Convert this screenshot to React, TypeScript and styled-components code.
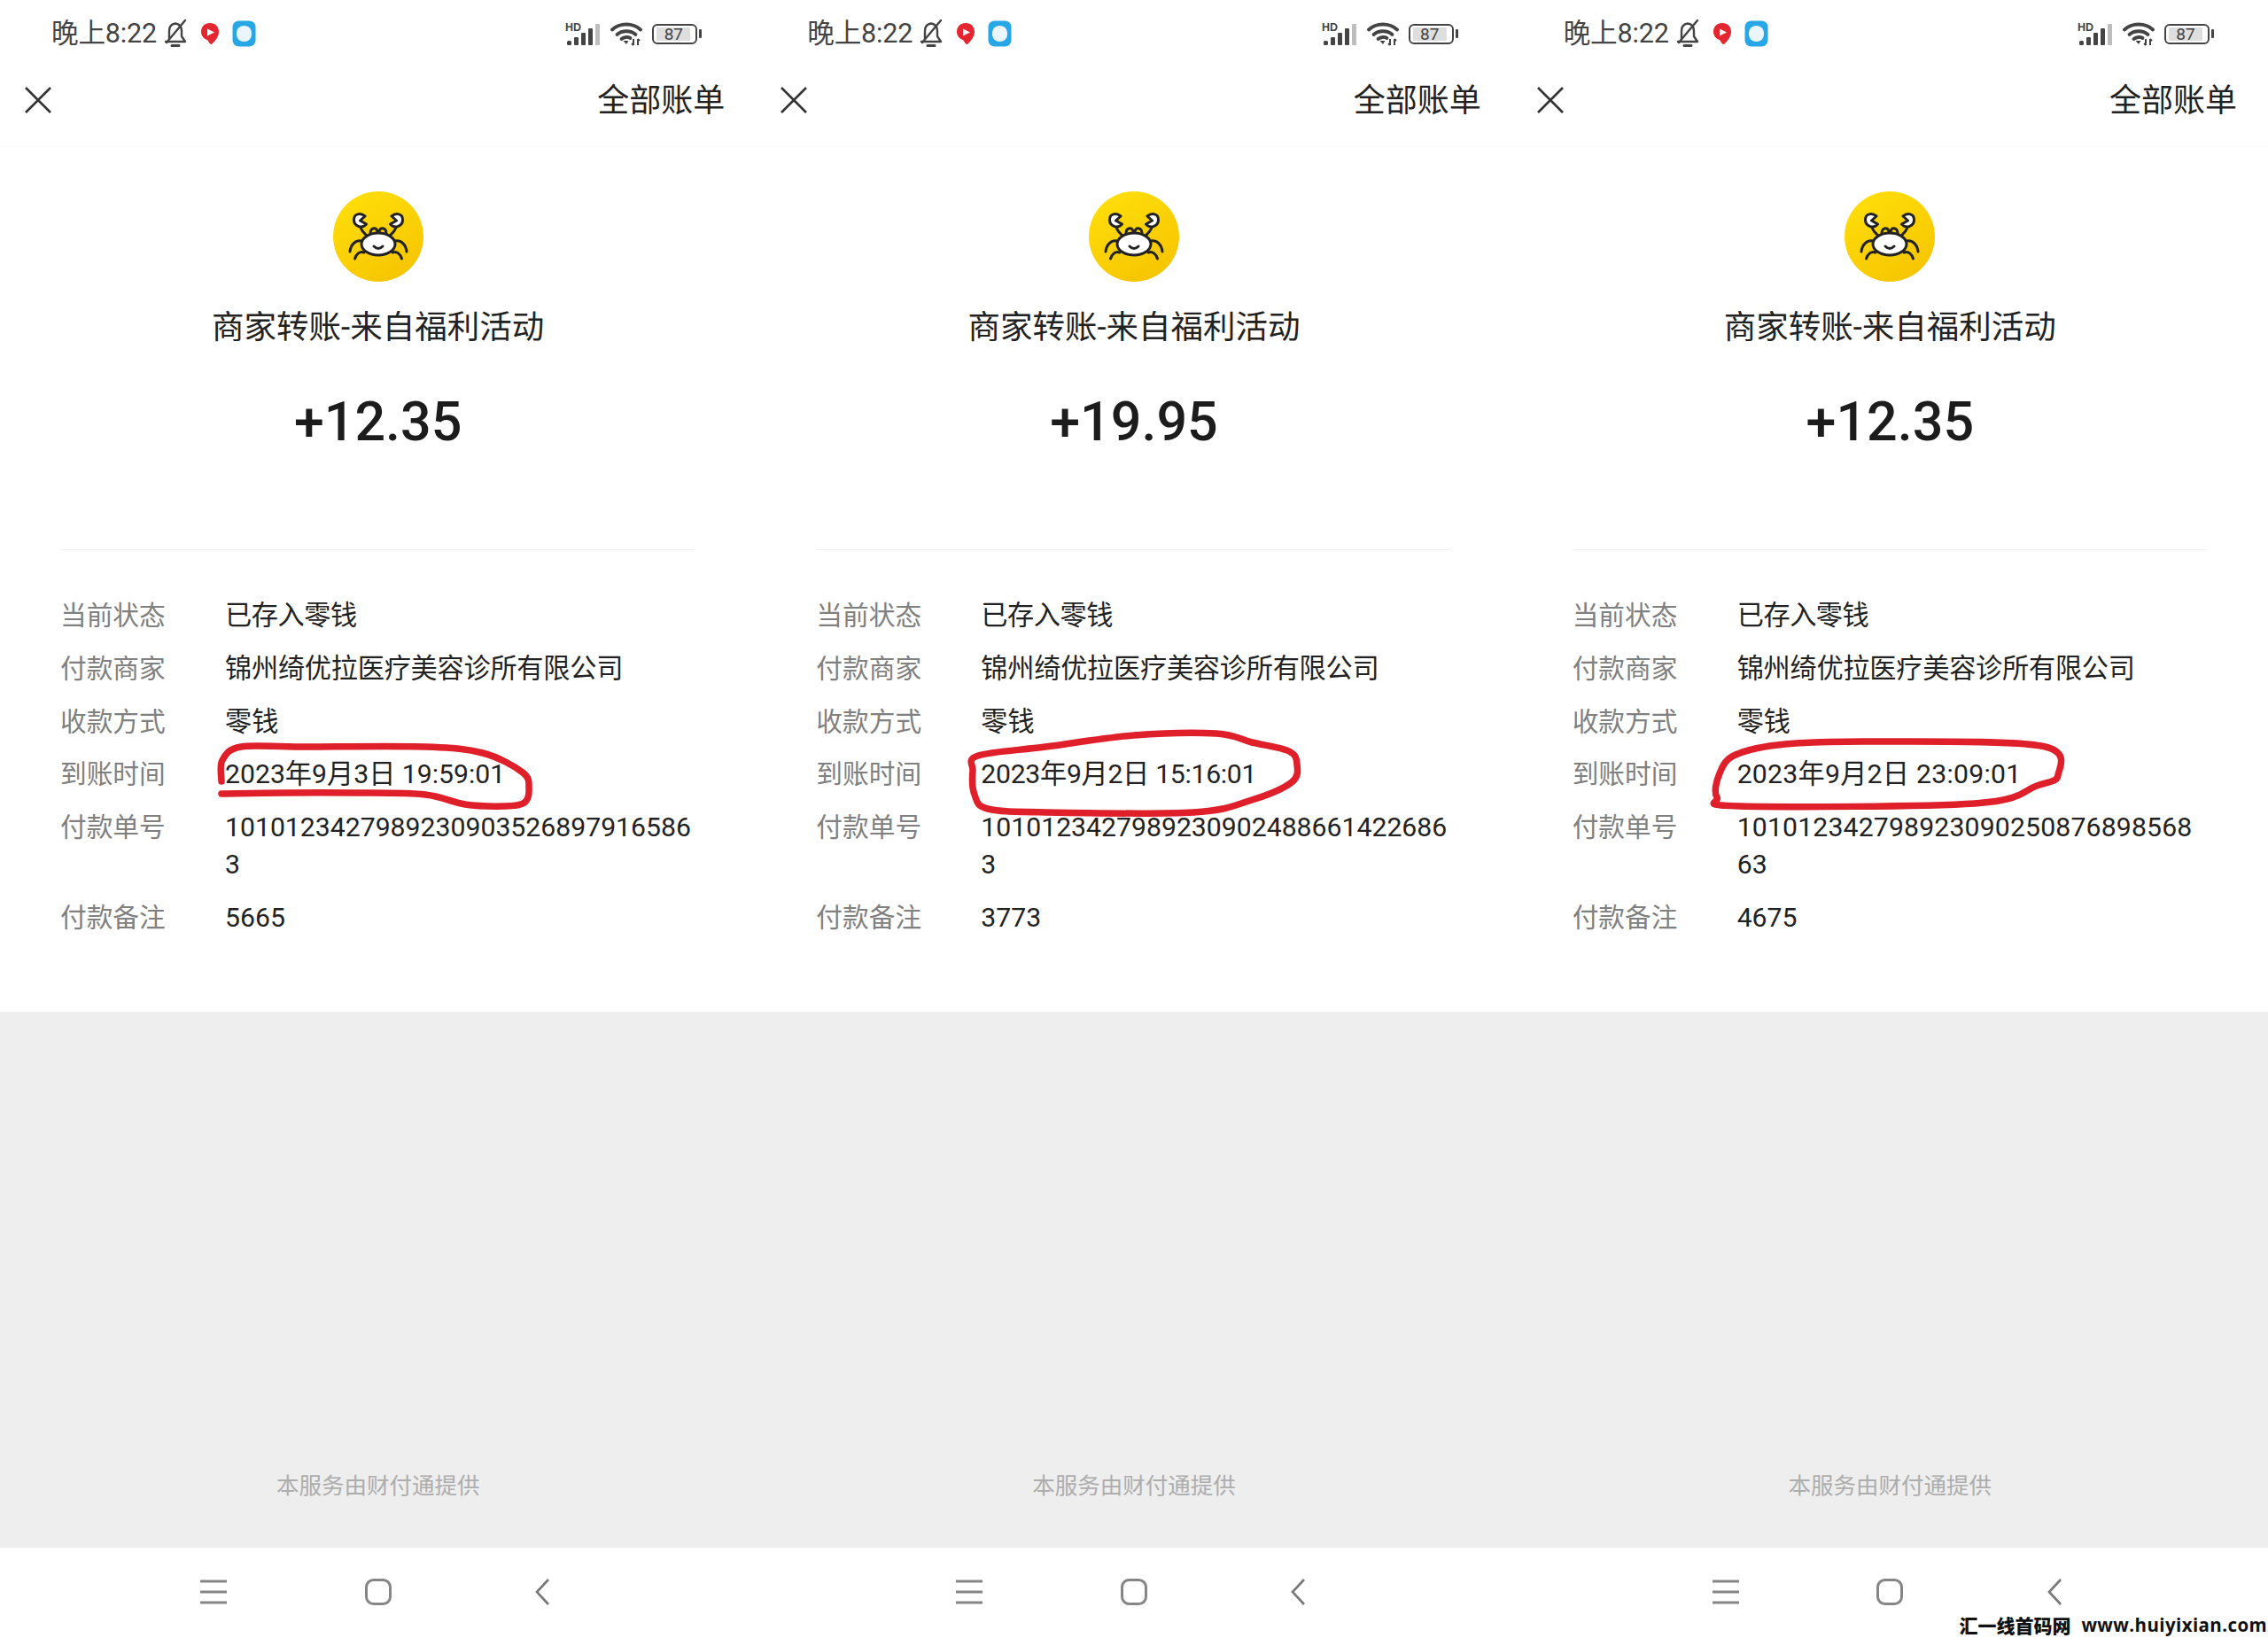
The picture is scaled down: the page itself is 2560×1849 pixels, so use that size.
import React from 'react';
import styled, { createGlobalStyle } from 'styled-components';

const Global = createGlobalStyle`
  html, body { margin: 0; padding: 0; background: #fff; }
  * { box-sizing: border-box; }
`;

const FONT = `Roboto, "Noto Sans CJK SC", sans-serif`;

const Page = styled.div`
  position: relative;
  width: 2560px;
  height: 1849px;
  display: grid;
  grid-template-columns: repeat(3, 1fr);
  overflow: hidden;
  font-family: ${FONT};
  background: #fff;
`;
const Panel = styled.section`
  position: relative;
  display: flex;
  flex-direction: column;
  height: 1849px;
  min-width: 0;
`;
const StatusBar = styled.div`
  height: 76px;
  display: flex;
  align-items: center;
  padding: 0 61px 0 58px;
  color: #444;
`;
const Clock = styled.span`
  font-size: 30.6px;
  line-height: 36px;
  letter-spacing: -0.2px;
  margin-right: 7px;
`;
const LeftIcons = styled.div`
  display: flex;
  align-items: center;
  gap: 14px;
`;
const RightIcons = styled.div`
  margin-left: auto;
  display: flex;
  align-items: center;
  gap: 11px;
`;
const Battery = styled.div`
  position: relative;
  width: 51px;
  height: 23px;
  border: 2.5px solid #444;
  border-radius: 6px;
  padding: 2px 6px 2px 3px;
  margin-right: 5px;
  display: flex;
  &::after {
    content: '';
    position: absolute;
    right: -7px;
    top: 4px;
    width: 3px;
    height: 10px;
    border-radius: 1px;
    background: #444;
  }
`;
const BatteryFill = styled.div`
  flex: 1;
  background: #dedede;
  border-radius: 1px;
  display: flex;
  align-items: center;
  justify-content: center;
  font-size: 19px;
  line-height: 15px;
  color: #444;
`;
const Header = styled.header`
  height: 89px;
  padding: 0 35px 13px 28px;
  display: flex;
  align-items: center;
  justify-content: space-between;
  border-bottom: 1px solid #f8f8f8;
`;
const CloseSlot = styled.div`
  display: flex;
  margin-bottom: 2px;
`;
const HeaderLink = styled.span`
  font-size: 36px;
  line-height: 50px;
  color: #222;
`;
const Summary = styled.main`
  height: 977px;
  padding: 51px 68px 0;
  background: #fff;
`;
const Hero = styled.div`
  display: flex;
  flex-direction: column;
  align-items: center;
`;
const Title = styled.h1`
  margin: 27px 0 0;
  font-size: 36.5px;
  line-height: 50px;
  font-weight: 400;
  color: #222;
`;
const Amount = styled.div`
  margin-top: 41px;
  font-size: 61px;
  line-height: 80px;
  font-weight: 500;
  color: #1c1c1c;
`;
const Divider = styled.hr`
  margin: 104px 1px 53px 0;
  border: 0;
  height: 1px;
  background: #f0f0f0;
`;
const Rows = styled.dl`
  margin: 0;
  display: flex;
  flex-direction: column;
  gap: 17.8px;
`;
const Row = styled.div`
  display: grid;
  grid-template-columns: 186px 1fr;
`;
const Label = styled.dt`
  font-size: 29.7px;
  line-height: 42px;
  color: #808080;
`;
const Value = styled.dd`
  margin: 0;
  font-size: 30.2px;
  line-height: 42px;
  color: #222;
  white-space: nowrap;
`;
const ValueLine = styled.div<{ $tracking: number }>`
  letter-spacing: ${(p) => p.$tracking}px;
`;
const Footer = styled.div`
  flex: 1;
  background: #eeeeee;
  display: flex;
  align-items: flex-end;
  justify-content: center;
  padding-bottom: 53px;
`;
const FooterText = styled.span`
  font-size: 25.5px;
  line-height: 34px;
  color: #adadad;
`;
const NavBar = styled.nav`
  height: 102px;
  display: flex;
  align-items: center;
  justify-content: center;
  background: #fff;
  padding-bottom: 2px;
`;
const NavSlot = styled.div`
  width: 185.5px;
  display: flex;
  justify-content: center;
`;
const Ring = styled.svg`
  position: absolute;
  inset: 0;
  width: 100%;
  height: 100%;
  pointer-events: none;
`;
const Watermark = styled.div`
  position: absolute;
  right: 1px;
  bottom: 2px;
  display: flex;
  align-items: center;
  gap: 12px;
  font-family: "Noto Sans CJK SC", sans-serif;
  font-weight: 900;
  font-size: 21px;
  line-height: 26px;
  color: #111;
  white-space: nowrap;
`;
const WatermarkUrl = styled.span`
  font-family: "Open Sans", sans-serif;
  font-weight: 700;
  font-size: 20.5px;
  letter-spacing: 0.4px;
`;

function smooth(pts: number[][], closed: boolean) {
  const n = pts.length;
  const at = (i: number) => (closed ? pts[(i + n) % n] : pts[Math.max(0, Math.min(n - 1, i))]);
  let d = `M${pts[0][0]} ${pts[0][1]}`;
  const count = closed ? n : n - 1;
  for (let i = 0; i < count; i++) {
    const [p0, p1, p2, p3] = [at(i - 1), at(i), at(i + 1), at(i + 2)];
    const c1 = [p1[0] + (p2[0] - p0[0]) / 6, p1[1] + (p2[1] - p0[1]) / 6];
    const c2 = [p2[0] - (p3[0] - p1[0]) / 6, p2[1] - (p3[1] - p1[1]) / 6];
    d += ` C${c1[0].toFixed(1)} ${c1[1].toFixed(1)} ${c2[0].toFixed(1)} ${c2[1].toFixed(1)} ${p2[0].toFixed(1)} ${p2[1].toFixed(1)}`;
  }
  return d + (closed ? ' Z' : '');
}

const BellOff = () => (
  <svg width="28" height="34" viewBox="0 0 28 34" fill="none" stroke="#444" strokeWidth="2.4" strokeLinecap="round" strokeLinejoin="round">
    <path d="M7 23 V14 C7 9 10 6 14 5.5 C18 6 21 9 21 14 V20 L25 26 H3" />
    <path d="M25 2 L4 27" />
    <path d="M10 30.5 H18" strokeWidth="3" />
  </svg>
);
const RedApp = () => (
  <svg width="22" height="26" viewBox="0 0 22 26">
    <path d="M11 1 C17 1 21 5 21 11 C21 17 16 22 13 25 C11 25 10 23 8 20 C4 19 1 15 1 11 C1 5 5 1 11 1 Z" fill="#e3262f" />
    <path d="M8 7.5 L16 11.5 L8 15.5 Z" fill="#fff" />
  </svg>
);
const BlueApp = () => (
  <svg width="27" height="30" viewBox="0 0 27 30">
    <rect x="0.5" y="0.5" width="26" height="29" rx="7" fill="#28a7e6" />
    <path d="M13.5 6 C19 6 22 9.5 22 15 C22 20.5 19 24 13.5 24 C8 24 5 20.5 5 15 C5 9.5 8 6 13.5 6 Z" fill="#eaf6fc" />
  </svg>
);
const Signal = () => (
  <svg width="40" height="27" viewBox="0 0 40 27">
    <text x="0" y="9.5" fontFamily="Liberation Sans, sans-serif" fontWeight="700" fontSize="12.5" fill="#444">HD</text>
    <g fill="#444">
      <rect x="2" y="21" width="5" height="5" rx="1.5" />
      <rect x="10" y="17" width="5" height="9" rx="1" />
      <rect x="18" y="12" width="5" height="14" rx="1" />
      <rect x="26" y="7" width="5" height="19" rx="1" />
    </g>
    <rect x="34" y="2" width="5" height="24" rx="1" fill="#bdbdbd" />
  </svg>
);
const Wifi = () => (
  <svg width="36" height="28" viewBox="0 0 36 28" fill="none" stroke="#444" strokeWidth="3.8" strokeLinecap="round">
    <path d="M2 9.5 C10.5 1.5 25.5 1.5 34 9.5" />
    <path d="M7.5 15 C13 10 23 10 28.5 15" />
    <path d="M12.5 20 C15.5 17.5 20 17.5 22.5 19" />
    <path d="M14.5 22 L18 26 L20.5 22 Z" fill="#444" stroke="none" />
    <g strokeWidth="2" strokeLinecap="butt">
      <path d="M26 20 V27 M24 25 L26 27" />
      <path d="M31 27 V20 M33 22 L31 20" />
    </g>
  </svg>
);
const CloseIcon = () => (
  <svg width="30" height="30" viewBox="0 0 30 30" stroke="#333" strokeWidth="2.6" fill="none">
    <path d="M1 1 L29 29 M29 1 L1 29" />
  </svg>
);
const Crab = () => (
  <svg width="102" height="102" viewBox="0 0 102 102">
    <defs>
      <linearGradient id="crabBg" x1="0.2" y1="0" x2="0.8" y2="1">
        <stop offset="0" stopColor="#ffde0a" />
        <stop offset="1" stopColor="#f6c400" />
      </linearGradient>
    </defs>
    <circle cx="51" cy="51" r="51" fill="url(#crabBg)" />
    <g fill="none" stroke="#222" strokeWidth="3" strokeLinecap="round" strokeLinejoin="round">
      <path d="M42 48 C42 40 50 40 50 46 M52 46 C52 40 60 40 60 48" />
      <ellipse cx="51" cy="59.5" rx="19" ry="12.5" fill="#fff" />
      <path d="M46 62 Q51 67 56 62" />
      <g id="crabSide">
        <path d="M36 28 C31 24 23.5 25 23.5 32 C23.5 39 32 43 37.5 37 L30.5 33 Z" fill="#fff" />
        <path d="M31 41 C33 46 36 48 38 50" />
        <path d="M32 56 C25 55 20 60 19 68" />
        <path d="M35 69 C30 67 26 71 24.5 76" />
      </g>
      <use href="#crabSide" transform="translate(102 0) scale(-1 1)" />
    </g>
  </svg>
);
const MenuIcon = () => (
  <svg width="30" height="28" viewBox="0 0 30 28" fill="none" stroke="#868686" strokeWidth="3">
    <path d="M0 2 H30 M0 14 H30 M0 26 H30" />
  </svg>
);
const HomeIcon = () => (
  <svg width="30" height="30" viewBox="0 0 30 30" fill="none" stroke="#868686" strokeWidth="3">
    <rect x="1.5" y="1.5" width="27" height="27" rx="8" />
  </svg>
);
const BackIcon = () => (
  <svg width="16" height="30" viewBox="0 0 16 30" fill="none" stroke="#777" strokeWidth="2.6">
    <path d="M15 1 L2 15 L15 29" />
  </svg>
);

type Bill = {
  amount: string;
  time: string;
  timeTracking: number;
  order: string[];
  tracking: number;
  note: string;
  ring: number[][];
  closed: boolean;
};

const bills: Bill[] = [
  {
    amount: '+12.35',
    time: '2023年9月3日 19:59:01',
    timeTracking: 0,
    order: ['1010123427989230903526897916586', '3'],
    tracking: 0,
    note: '5665',
    closed: false,
    ring: [[250, 882], [251, 858], [272, 843], [340, 843], [480, 843], [545, 850], [590, 872], [597, 890], [592, 906], [570, 910], [525, 908], [480, 897], [400, 895], [320, 895], [250, 896]],
  },
  {
    amount: '+19.95',
    time: '2023年9月2日 15:16:01',
    timeTracking: -0.3,
    order: ['1010123427989230902488661422686', '3'],
    tracking: 0,
    note: '3773',
    closed: true,
    ring: [[251, 853], [327, 843], [427, 830], [520, 828], [560, 838], [602, 848], [611, 863], [605, 883], [560, 903], [494, 917], [327, 917], [262, 913], [247, 897], [245, 870]],
  },
  {
    amount: '+12.35',
    time: '2023年9月2日 23:09:01',
    timeTracking: 0.25,
    order: ['101012342798923090250876898568', '63'],
    tracking: 0.16,
    note: '4675',
    closed: true,
    ring: [[252, 852], [308, 840], [410, 837], [597, 842], [616, 875], [592, 887], [522, 907], [257, 910], [231, 900], [234, 873]],
  },
];

const BillPanel = ({ bill }: { bill: Bill }) => {
  const rows: [string, string[], number][] = [
    ['当前状态', ['已存入零钱'], -0.45],
    ['付款商家', ['锦州绮优拉医疗美容诊所有限公司'], -0.25],
    ['收款方式', ['零钱'], 0],
    ['到账时间', [bill.time], bill.timeTracking],
    ['付款单号', bill.order, bill.tracking],
    ['付款备注', [bill.note], 0],
  ];
  return (
    <Panel>
      <StatusBar>
        <Clock>晚上8:22</Clock>
        <LeftIcons>
          <BellOff />
          <RedApp />
          <BlueApp />
        </LeftIcons>
        <RightIcons>
          <Signal />
          <Wifi />
          <Battery>
            <BatteryFill>87</BatteryFill>
          </Battery>
        </RightIcons>
      </StatusBar>
      <Header>
        <CloseSlot>
          <CloseIcon />
        </CloseSlot>
        <HeaderLink>全部账单</HeaderLink>
      </Header>
      <Summary>
        <Hero>
          <Crab />
          <Title>商家转账-来自福利活动</Title>
          <Amount>{bill.amount}</Amount>
        </Hero>
        <Divider />
        <Rows>
          {rows.map(([k, v, t]) => (
            <Row key={k}>
              <Label>{k}</Label>
              <Value>
                {v.map((line) => (
                  <ValueLine key={line} $tracking={t}>{line}</ValueLine>
                ))}
              </Value>
            </Row>
          ))}
        </Rows>
      </Summary>
      <Footer>
        <FooterText>本服务由财付通提供</FooterText>
      </Footer>
      <NavBar>
        <NavSlot><MenuIcon /></NavSlot>
        <NavSlot><HomeIcon /></NavSlot>
        <NavSlot><BackIcon /></NavSlot>
      </NavBar>
      <Ring viewBox="0 0 853.33 1849" fill="none">
        <path d={smooth(bill.ring, bill.closed)} stroke="#df1f2a" strokeWidth="7.5" strokeLinecap="round" strokeLinejoin="round" />
      </Ring>
    </Panel>
  );
};

export default function App() {
  return (
    <Page>
      <Global />
      {bills.map((b, i) => (
        <BillPanel key={i} bill={b} />
      ))}
      <Watermark>
        <span>汇一线首码网</span>
        <WatermarkUrl>www.huiyixian.com</WatermarkUrl>
      </Watermark>
    </Page>
  );
}
